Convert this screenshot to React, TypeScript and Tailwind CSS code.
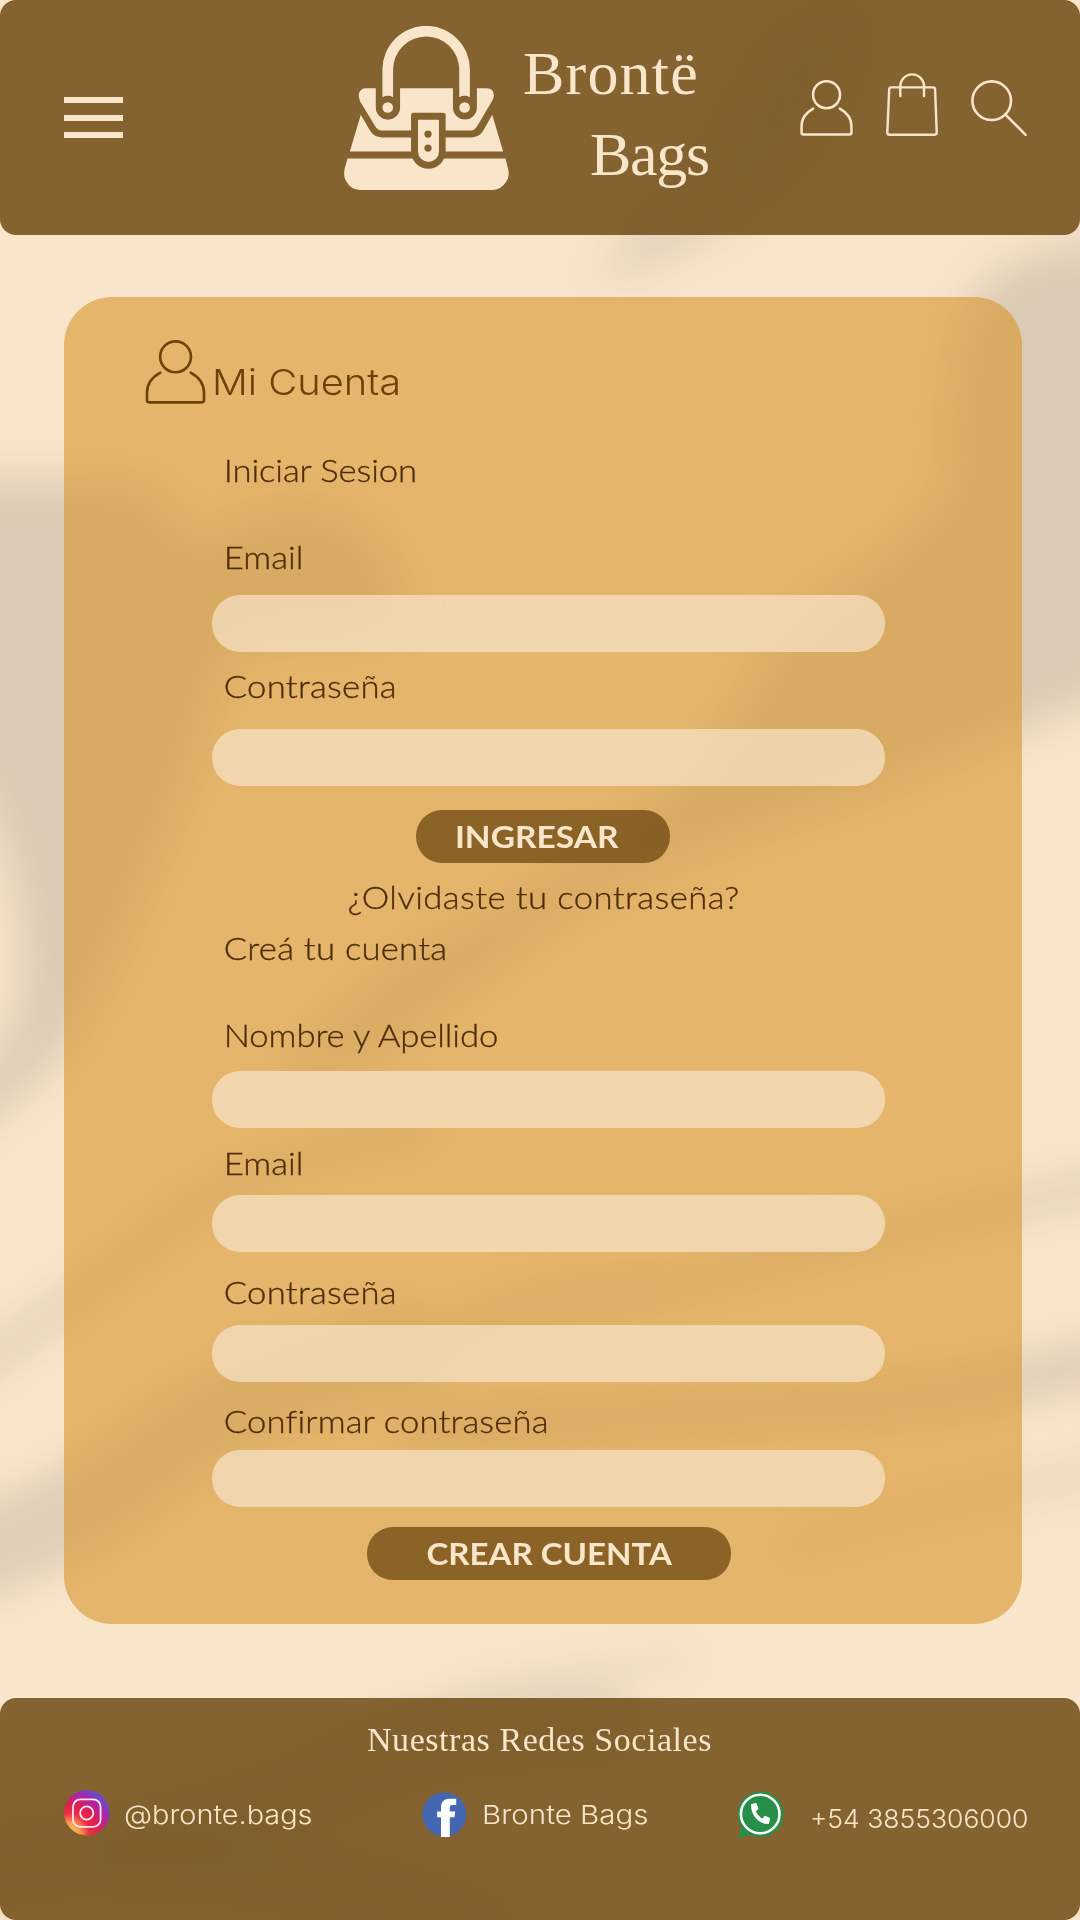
import React from "react";
import { FaPhoneAlt } from "react-icons/fa";

function Shadows() {
  return (
    <svg className="pointer-events-none absolute inset-0 h-full w-full" viewBox="0 0 1080 1920" aria-hidden="true">
      <defs>
        <filter id="soft" x="-20%" y="-20%" width="140%" height="140%">
          <feGaussianBlur stdDeviation="22" />
        </filter>
        <filter id="softer" x="-20%" y="-20%" width="140%" height="140%">
          <feGaussianBlur stdDeviation="18" />
        </filter>
      </defs>
      <g opacity="0.25" fill="#887d72" stroke="none">
        <g filter="url(#soft)">
          <path d="M-60 480 H110 Q170 480 190 540 L260 510 Q330 490 380 540 L410 600 Q380 650 280 640 L225 660 Q200 770 150 880 Q110 990 50 1070 L-60 1160 V1090 Q20 1060 22 970 Q20 830 -60 740Z" />
          <path d="M1140 240 Q1000 240 965 310 Q940 400 950 480 Q900 550 830 590 L770 640 Q740 730 640 810 Q520 900 400 960 Q320 1020 270 1090 L370 1060 Q480 980 580 905 Q700 850 880 790 L1140 680Z" />
          <path d="M870 10 Q780 0 745 80 L700 160 Q640 220 590 285 Q680 260 760 200 Q860 120 870 10Z" opacity="0.85" />
        </g>
        <g filter="url(#softer)" fill="none" stroke="#887d72" strokeLinecap="round">
          <path d="M420 1130 Q250 1160 170 1225 T-40 1380" strokeWidth="36" opacity="0.65" />
          <path d="M1120 1180 Q900 1230 700 1280 Q520 1310 400 1370" strokeWidth="36" opacity="0.65" />
          <path d="M640 1290 Q520 1290 450 1340" strokeWidth="50" opacity="0.4" />
          <path d="M400 1350 Q220 1400 150 1460 T-40 1560" strokeWidth="90" opacity="0.85" />
          <path d="M1120 1355 Q960 1400 830 1405 T420 1430" strokeWidth="48" opacity="0.85" />
          <path d="M1120 1470 Q920 1500 800 1545" strokeWidth="40" opacity="0.4" />
          <path d="M600 1725 Q430 1725 330 1780 T-30 1870" strokeWidth="70" opacity="0.75" />
          <path d="M680 1660 Q560 1675 460 1700" strokeWidth="30" opacity="0.35" />
          <path d="M120 1860 Q300 1860 480 1930" strokeWidth="60" opacity="0.8" />
        </g>
      </g>
    </svg>
  );
}

function HandbagLogo() {
  return (
    <svg className="mt-[26px] h-[164px] w-[165px] shrink-0" viewBox="42 48 495 493" fill="#f8e5ca">
      <defs>
        <mask id="cutouts" maskUnits="userSpaceOnUse" x="0" y="0" width="600" height="600">
          <rect width="600" height="600" fill="white" />
          <path fill="black" d="M137 220V293a36.5 36.5 0 0 0 73 0V220ZM369 220V293a36 36 0 0 0 72 0V220Z" />
          <path fill="black" d="M243 317q0-8 8-8H339q8 0 8 8V425a52 52 0 0 1-104 0Z" />
        </mask>
      </defs>
      <path d="M157 262V179a131.500 131.500 0 0 1 263 0V262Q404 254 388 262V179a99.500 99.500 0 0 0-199 0V262Q173 254 157 262Z" />
      <g mask="url(#cutouts)">
        <path d="M107 235H470q22 0 22 22q0 8-5 16L443 347Q434 362 424 362H155Q142 362 134 347L90 275Q84 262 86 252Q90 235 107 235Z" />
        <path d="M92 315L120 363Q132 382 155 383H425Q448 382 460 363L487 315L520 425H59Z" />
        <path d="M52 446H527L535 478Q540 500 530 515Q514 541 489 541H90Q62 541 48 515Q38 500 44 475Z" />
      </g>
      <circle cx="173" cy="293" r="16" />
      <circle cx="404" cy="293" r="16" />
      <path
        fillRule="evenodd"
        d="M264 330H327V425a31.5 31.5 0 0 1-63 0ZM283 373a11 11 0 1 0 22 0a11 11 0 1 0-22 0ZM283 415a11 11 0 1 0 22 0a11 11 0 1 0-22 0Z"
      />
    </svg>
  );
}

function UserIcon({ className, strokeWidth }: { className: string; strokeWidth: number }) {
  return (
    <svg className={className} viewBox="0 0 52.5 56" fill="none" stroke="currentColor" strokeWidth={strokeWidth} strokeLinecap="round">
      <circle cx="26.3" cy="14.7" r="13.5" />
      <path d="M12.9 28.6C5.5 32.8 1.3 38.5 1.3 46V52.6Q1.3 54.6 3.3 54.6H49.2Q51.2 54.6 51.2 52.6V46C51.2 38.5 47 32.8 39.6 28.6" />
    </svg>
  );
}

function ShoppingIcon() {
  return (
    <svg className="ml-[33px] h-[63px] w-[52px]" viewBox="0 0 52 63" fill="none" stroke="currentColor" strokeWidth="2.4" strokeLinecap="round" strokeLinejoin="round">
      <path d="M5.2 14.4H47Q49 14.4 49.1 16.4L50.7 59.6Q50.7 61.7 48.7 61.7H3.3Q1.3 61.7 1.3 59.6L3.2 16.4Q3.3 14.4 5.2 14.4Z" />
      <path d="M14.3 23V13.2a11.85 11.85 0 0 1 23.7 0V23" />
    </svg>
  );
}

function SearchIcon() {
  return (
    <svg className="ml-[33px] h-[56px] w-[56px]" viewBox="0 0 56 56" fill="none" stroke="currentColor" strokeWidth="2.6" strokeLinecap="round">
      <circle cx="20.7" cy="20.7" r="19.3" />
      <path d="M34.2 34.4L54.6 54.8" />
    </svg>
  );
}

function InstagramIcon() {
  return (
    <svg className="h-[46px] w-[46px]" viewBox="0 0 46 46">
      <defs>
        <radialGradient id="ig" cx="0.12" cy="0.95" r="1.15">
          <stop offset="0" stopColor="#fdc65c" />
          <stop offset="0.2" stopColor="#fb9a4e" />
          <stop offset="0.38" stopColor="#ee2b45" />
          <stop offset="0.55" stopColor="#e01f50" />
          <stop offset="0.74" stopColor="#b322a4" />
          <stop offset="0.9" stopColor="#6c48cc" />
          <stop offset="1" stopColor="#5c4fd2" />
        </radialGradient>
      </defs>
      <circle cx="22.8" cy="22.8" r="22.7" fill="url(#ig)" />
      <g fill="none" stroke="#ffe9f2" strokeWidth="1.8">
        <rect x="9" y="9.3" width="27.6" height="27.6" rx="7.5" />
        <circle cx="22.7" cy="23" r="6.6" />
      </g>
    </svg>
  );
}

function FacebookIcon() {
  return (
    <svg className="mt-[2px] h-[45px] w-[45px]" viewBox="0 0 45 45">
      <circle cx="22.4" cy="22.4" r="22" fill="#4367b2" />
      <path
        fill="#fff"
        d="M19 44.9V25.3H15.2V19.5H19V15.6C19 10 22 6.8 27.6 6.8H34.2V13H30.6C28.4 13 27.8 14.2 27.8 16.2V19.5H33.2L32.5 25.3H27.8V44.9Z"
      />
    </svg>
  );
}

function WhatsAppIcon() {
  return (
    <div className="relative h-[50px] w-[46px]">
      <svg className="h-[50px] w-[46px]" viewBox="0 0 46 50">
        <path d="M.5 48.6L2.6 37L14 44.6Q6 45.500 .5 48.600Z" fill="#268f48" />
        <circle cx="22.6" cy="24.2" r="22.8" fill="#268f48" />
        <circle cx="22.2" cy="24" r="19.300" fill="none" stroke="#fff" strokeWidth="2.600" />
      </svg>
      <FaPhoneAlt className="absolute left-[12.500px] top-[13.500px] h-[21px] w-[19px] text-white" preserveAspectRatio="none" />
    </div>
  );
}

const label =
  "h-10 w-fit origin-left scale-x-[1.12] whitespace-nowrap pl-[10.500px] font-['Lato',sans-serif] text-[31px] leading-10 font-light text-[#4b2d08] [-webkit-text-stroke:0.3px_#4b2d08]";
const field = "block h-[57px] w-[673px] rounded-[28px] bg-[#f8e5ca]/70 px-6 text-[24px] text-[#4b2d08] outline-none";
const button = "h-[53px] rounded-[26px] bg-[#67420a]/70 font-['Lato',sans-serif] text-[31px] leading-[53px] font-bold text-[#f8e5ca]";

export default function App() {
  return (
    <div className="relative flex h-[1920px] w-[1080px] flex-col overflow-hidden bg-[#f8e5ca]">
      <Shadows />

      <header className="relative flex h-[235px] w-full shrink-0 items-start rounded-[16px] bg-[#67420a]/80 pl-[64px] text-[#f8e5ca]">
        <button aria-label="Menú" className="mt-[97px] flex h-[41px] w-[59px] shrink-0 flex-col justify-between">
          <span className="h-[6px] w-full bg-[#f8e5ca]" />
          <span className="h-[6px] w-full bg-[#f8e5ca]" />
          <span className="h-[6px] w-full bg-[#f8e5ca]" />
        </button>
        <div className="ml-[221px] flex w-[456px] shrink-0 items-start">
          <HandbagLogo />
          <h1 className="ml-[14px] mt-[33px] font-['Liberation_Serif',serif] text-[62px] leading-[81px]">
            <span className="block tracking-[1.2px]">Brontë</span>
            <span className="block pl-[67px] tracking-[-1.3px]">Bags</span>
          </h1>
        </div>
        <nav className="mt-[73px] flex h-[63px] shrink-0 items-end">
          <UserIcon className="h-[56px] w-[53px]" strokeWidth={2.5} />
          <ShoppingIcon />
          <SearchIcon />
        </nav>
      </header>

      <main className="relative ml-[64px] mt-[62px] h-[1327px] w-[957.500px] shrink-0 rounded-[48px] bg-[#d7952c]/60 pl-[80.500px] pt-[43px]">
        <div className="flex h-[64px] items-start text-[#6b430a]">
          <UserIcon className="h-[64px] w-[61px]" strokeWidth={2.3} />
          <h2 className="ml-[6px] mt-[12px] origin-left scale-x-[1.105] whitespace-nowrap font-['Inter',sans-serif] text-[36px] leading-[60px] font-light">
            Mi Cuenta
          </h2>
        </div>

        <form className="ml-[67.500px] w-[673px]" onSubmit={(e) => e.preventDefault()}>
          <h3 className={`${label} mt-[46px] tracking-[-0.1px]`}>Iniciar Sesion</h3>
          <div className={`${label} mt-[47px]`}>Email</div>
          <input aria-label="Email" className={`${field} mt-[18px]`} />
          <div className={`${label} mt-[14px] tracking-[0.2px]`}>Contraseña</div>
          <input aria-label="Contraseña" type="password" className={`${field} mt-[23px]`} />
          <button className={`${button} ml-[204px] mt-[24px] block w-[254px] pr-[12px]`}>
            <span className="inline-block scale-x-[1.08]">INGRESAR</span>
          </button>
          <div className={`${label} ml-[124px] mt-[14px] tracking-[0.35px]`}>¿Olvidaste tu contraseña?</div>
          <h3 className={`${label} mt-[11px] tracking-[0.2px]`}>Creá tu cuenta</h3>
          <div className={`${label} mt-[47px] tracking-[-0.1px]`}>Nombre y Apellido</div>
          <input aria-label="Nombre y Apellido" className={`${field} mt-[16px]`} />
          <div className={`${label} mt-[15px]`}>Email</div>
          <input aria-label="Email nuevo" className={`${field} mt-[12px]`} />
          <div className={`${label} mt-[20px] tracking-[0.2px]`}>Contraseña</div>
          <input aria-label="Contraseña nueva" type="password" className={`${field} mt-[13px]`} />
          <div className={`${label} mt-[19px] tracking-[0.1px]`}>Confirmar contraseña</div>
          <input aria-label="Confirmar contraseña" type="password" className={`${field} mt-[9px]`} />
          <button className={`${button} ml-[155px] mt-[20px] block w-[364px]`}>
            <span className="inline-block scale-x-[1.065]">CREAR CUENTA</span>
          </button>
        </form>
      </main>

      <footer className="relative mt-[73.500px] h-[222.500px] w-full shrink-0 rounded-[16px] bg-[#67420a]/80 text-[#f8e5ca]">
        <h2 className="pl-[367px] pt-[22px] font-['Liberation_Serif',serif] text-[34px] leading-10 tracking-[0.55px]">
          Nuestras Redes Sociales
        </h2>
        <div className="mt-[30px] flex h-[50px] items-start whitespace-nowrap pl-[64px] font-['Inter',sans-serif] text-[26px] leading-[50px] font-light">
          <div className="flex w-[358px] items-start">
            <InstagramIcon />
            <span className="ml-[14px] origin-left scale-x-[1.11]">@bronte.bags</span>
          </div>
          <div className="flex w-[316px] items-start">
            <FacebookIcon />
            <span className="ml-[15px] origin-left scale-x-[1.135]">Bronte Bags</span>
          </div>
          <div className="flex items-start">
            <WhatsAppIcon />
            <span className="ml-[26px] mt-[4px] origin-left scale-x-[1.02]">+54 3855306000</span>
          </div>
        </div>
      </footer>
    </div>
  );
}
